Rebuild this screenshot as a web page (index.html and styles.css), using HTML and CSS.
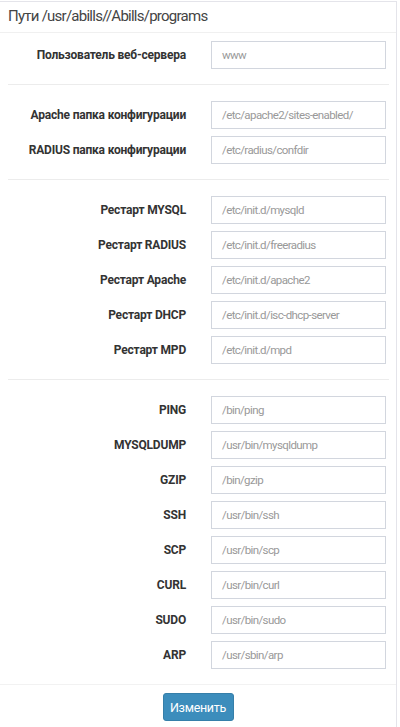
FILE: index.html
```html
<!DOCTYPE html>
<html lang="ru">
<head>
<meta charset="utf-8">
<title>Пути</title>
<link rel="stylesheet" href="styles.css">
</head>
<body>
<div class="box">
  <div class="box-header">Пути /usr/abills//Abills/programs</div>
  <div class="box-body">
    <div class="section">
      <div class="row"><label>Пользователь веб-сервера</label><div class="input">www</div></div>
    </div>
    <div class="section">
      <div class="row"><label>Apache папка конфигурации</label><div class="input">/etc/apache2/sites-enabled/</div></div>
      <div class="row"><label>RADIUS папка конфигурации</label><div class="input">/etc/radius/confdir</div></div>
    </div>
    <div class="section">
      <div class="row"><label>Рестарт MYSQL</label><div class="input">/etc/init.d/mysqld</div></div>
      <div class="row"><label>Рестарт RADIUS</label><div class="input">/etc/init.d/freeradius</div></div>
      <div class="row"><label>Рестарт Apache</label><div class="input">/etc/init.d/apache2</div></div>
      <div class="row"><label>Рестарт DHCP</label><div class="input">/etc/init.d/isc-dhcp-server</div></div>
      <div class="row"><label>Рестарт MPD</label><div class="input">/etc/init.d/mpd</div></div>
    </div>
    <div class="section last">
      <div class="row"><label>PING</label><div class="input">/bin/ping</div></div>
      <div class="row"><label>MYSQLDUMP</label><div class="input">/usr/bin/mysqldump</div></div>
      <div class="row"><label>GZIP</label><div class="input">/bin/gzip</div></div>
      <div class="row"><label>SSH</label><div class="input">/usr/bin/ssh</div></div>
      <div class="row"><label>SCP</label><div class="input">/usr/bin/scp</div></div>
      <div class="row"><label>CURL</label><div class="input">/usr/bin/curl</div></div>
      <div class="row"><label>SUDO</label><div class="input">/usr/bin/sudo</div></div>
      <div class="row"><label>ARP</label><div class="input">/usr/sbin/arp</div></div>
    </div>
  </div>
  <div class="box-footer"><button class="btn">Изменить</button></div>
</div>
</body>
</html>
```
FILE: styles.css
```css
html, body {
  margin: 0;
  padding: 0;
  background: #fff;
}
body {
  font-family: Roboto, "Open Sans", "Liberation Sans", sans-serif;
  color: #333;
}
.box {
  width: 396px;
  margin-top: 1px;
  border-top: 1px solid #e4e4ea;
  border-right: 1px solid #e4e4ea;
  background: #fff;
  height: 740px;
}
.box-header {
  height: 30px;
  line-height: 29px;
  padding-left: 8px;
  font-size: 15px;
  letter-spacing: -0.75px;
  color: #444;
  border-bottom: 1px solid #f0f0f0;
}
.box-body {
  padding: 0 7px 0 8px;
}
.section {
  display: flex;
  flex-direction: column;
  gap: 7px;
  padding: 8px 0 15px;
  border-bottom: 1px solid #ececec;
}
.section + .section {
  padding-top: 16px;
}
.row {
  display: grid;
  grid-template-columns: 178px 175px;
  column-gap: 25px;
  align-items: center;
}
.row label {
  text-align: right;
  font-weight: 700;
  font-size: 12px;
  letter-spacing: -0.2px;
  color: #333;
  white-space: nowrap;
}
.input {
  box-sizing: border-box;
  height: 28px;
  border: 1px solid #d2d6de;
  padding: 0 10px;
  line-height: 26px;
  font-size: 11.5px;
  letter-spacing: -0.6px;
  color: #999;
  white-space: nowrap;
  overflow: hidden;
}
.box-footer {
  border-top: 1px solid #f2f2f2;
  margin-top: -1px;
  display: flex;
  justify-content: center;
  padding-top: 8px;
}
.btn {
  width: 71px;
  height: 28px;
  background: #3c8dbc;
  border: 1px solid #367fa9;
  border-radius: 3px;
  color: #fff;
  font-family: Roboto, "Open Sans", sans-serif;
  font-size: 12.5px;
  letter-spacing: -0.3px;
  padding: 0;
}
```
